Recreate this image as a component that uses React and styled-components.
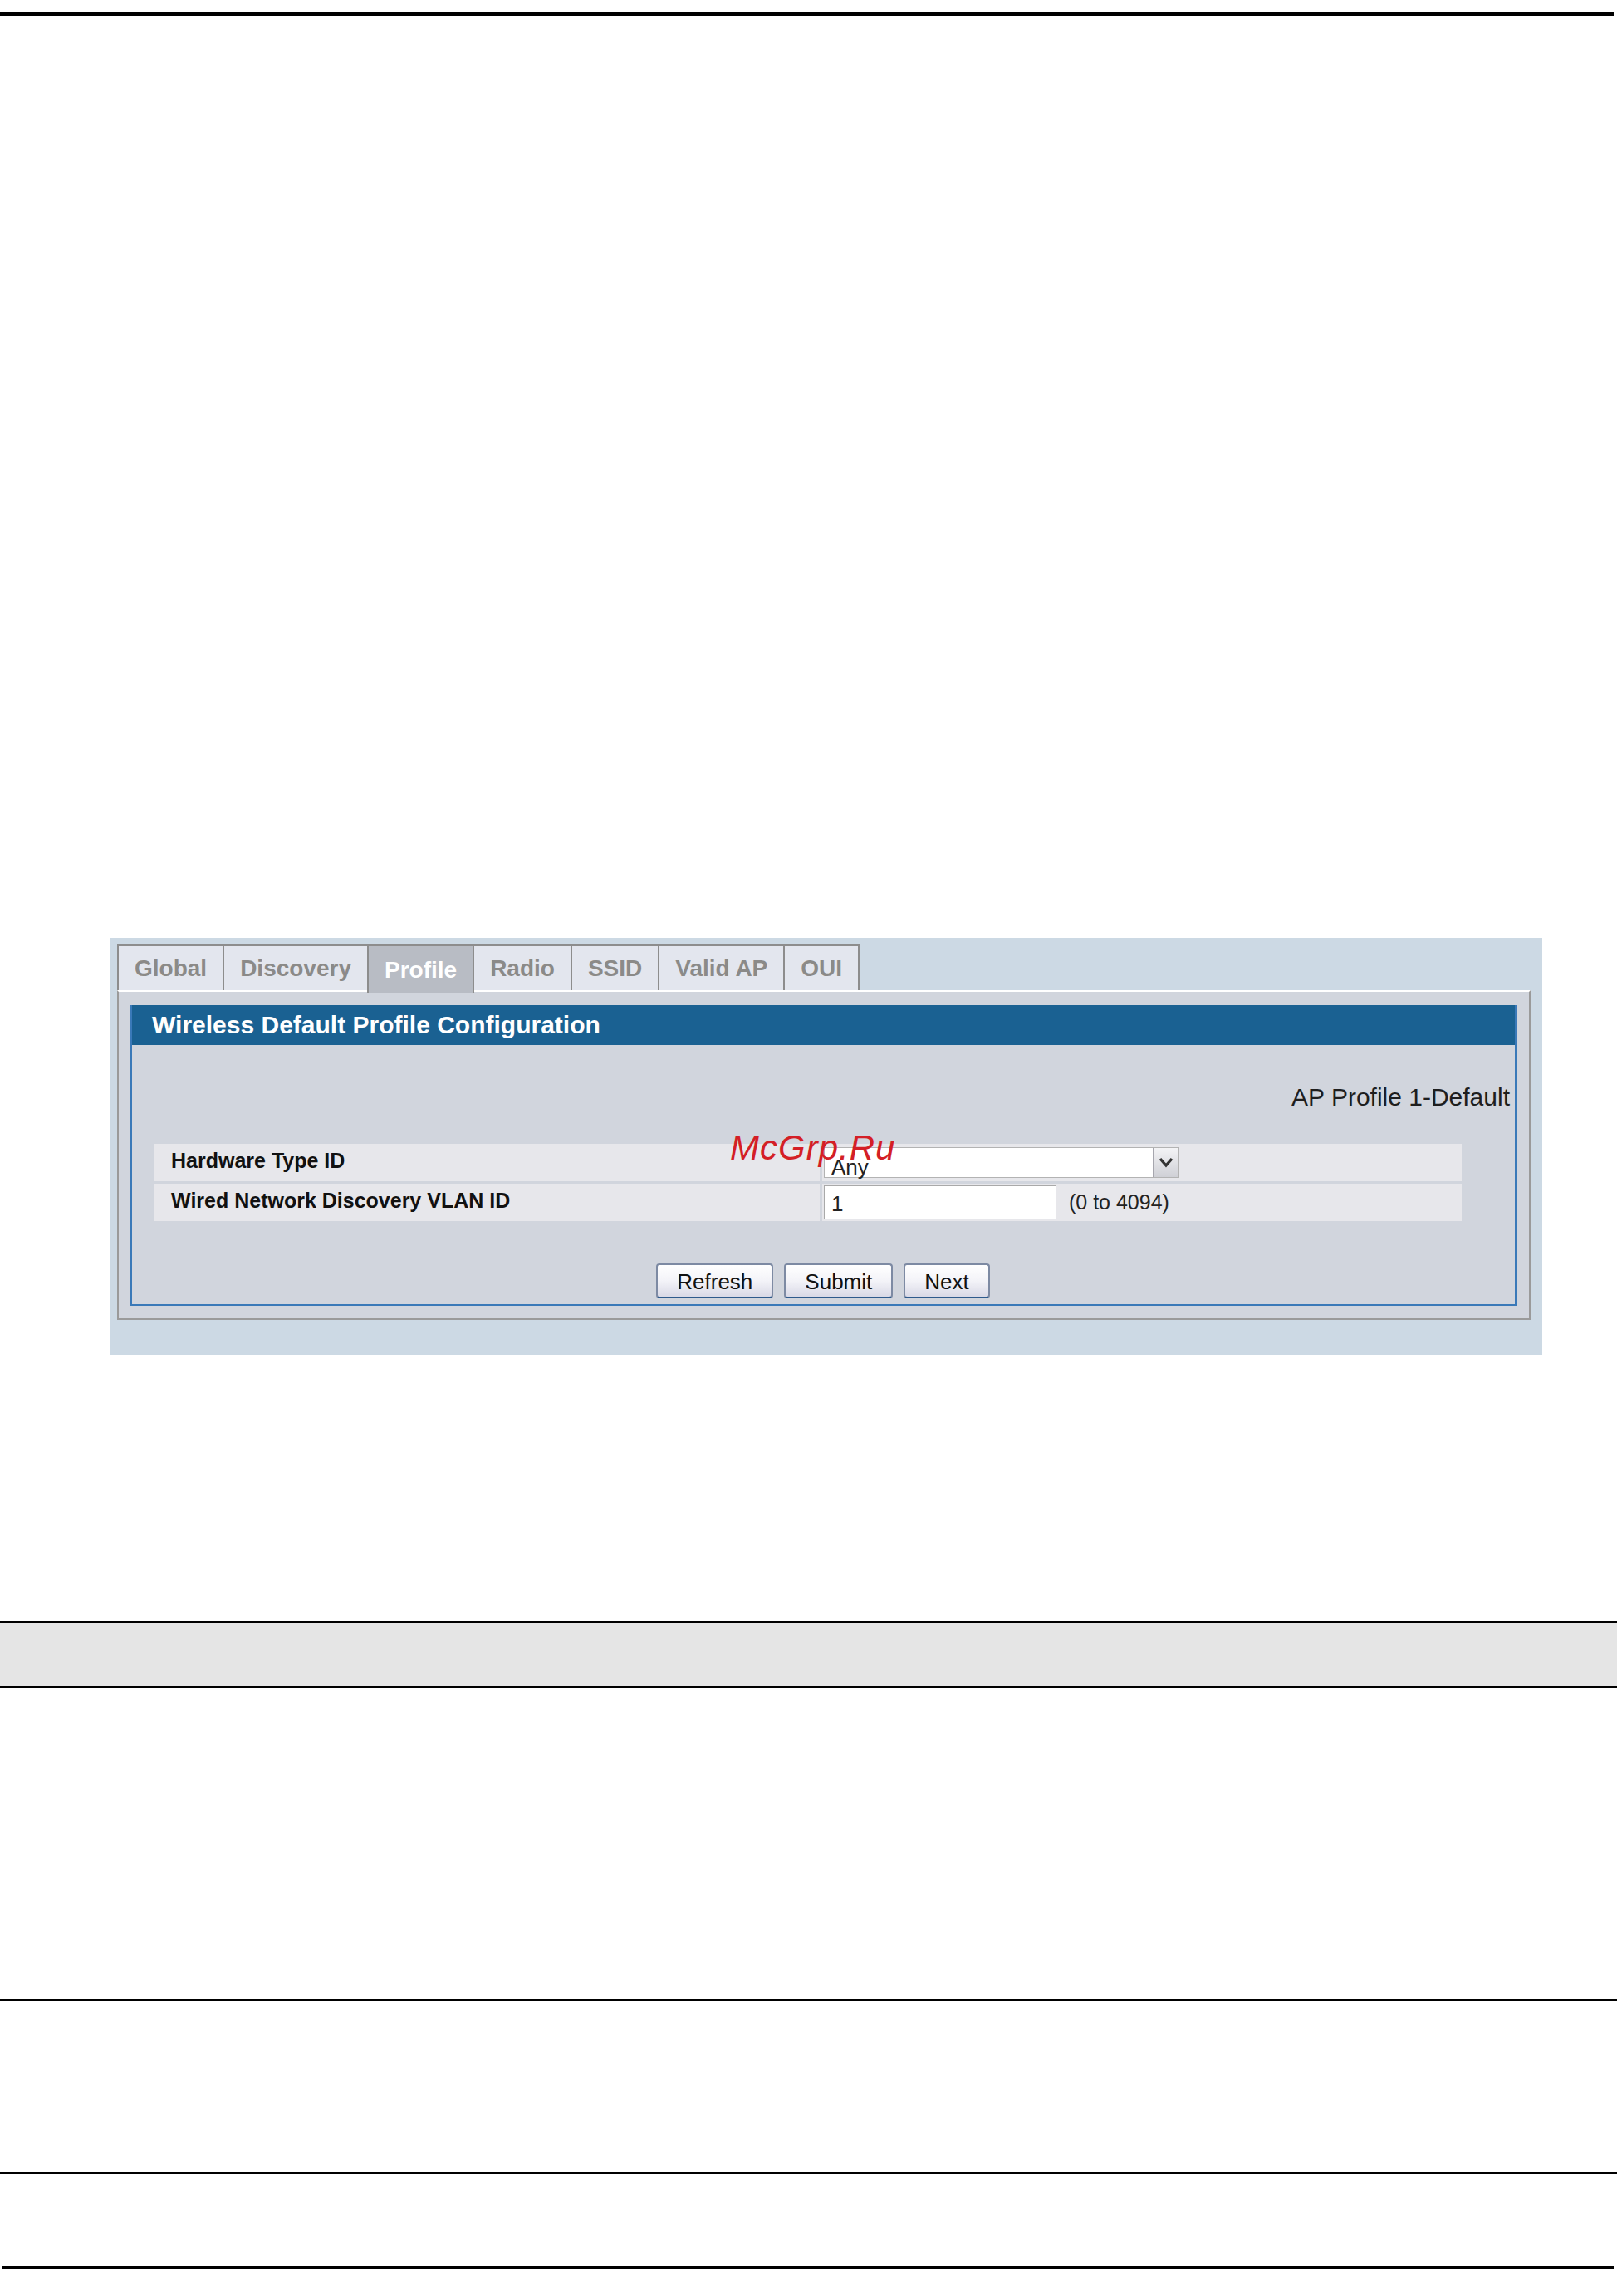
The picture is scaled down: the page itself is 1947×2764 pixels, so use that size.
import React from "react";
import styled, { createGlobalStyle } from "styled-components";

const GlobalStyle = createGlobalStyle`
  body {
    margin: 0;
    background: #fff;
    font-family: "Liberation Sans", Arial, sans-serif;
  }
`;

const Page = styled.div`
  width: 1947px;
  min-height: 2764px;
  overflow: hidden;
`;

const Rule = styled.div`
  height: ${props => props.thick ? 4 : 2}px;
  background: #000;
  margin: ${props => props.gap}px ${props => props.right || 0}px 0
    ${props => props.left || 0}px;
`;

const Figure = styled.div`
  padding: 1110px 0 0 132px;
`;

const Panel = styled.div`
  position: relative;
  width: 1725px;
  box-sizing: border-box;
  background: #ccd9e4;
  padding: 8px 14px 42px 9px;
`;

const TabBar = styled.div`
  display: flex;
  align-items: flex-end;
  height: 55px;
`;

const Tab = styled.div`
  position: relative;
  z-index: ${props => (props.active ? 1 : 0)};
  display: flex;
  align-items: center;
  box-sizing: border-box;
  height: ${props => (props.active ? 59 : 55)}px;
  margin-bottom: ${props => (props.active ? -4 : 0)}px;
  margin-left: -2px;
  padding: 0 19px;
  border: 2px solid #8d8d8d;
  border-bottom: none;
  background: ${props => (props.active ? "#b8bcc4" : "#e3e6ee")};
  color: ${props => (props.active ? "#ffffff" : "#8b8a88")};
  font-size: 28px;
  font-weight: 700;
  &:first-child {
    margin-left: 0;
  }
`;

const ContentBox = styled.div`
  border: 2px solid #9a9a9a;
  border-top-color: #ffffff;
  background: #d1d5dd;
  padding: 16px 15px 15px 14px;
`;

const BlueBox = styled.div`
  border: 2px solid #3a79b8;
  border-top: none;
  background: #d1d5dd;
`;

const TitleBar = styled.div`
  height: 48px;
  display: flex;
  align-items: center;
  padding-left: 24px;
  background: #1a6192;
  color: #fff;
  font-size: 30px;
  font-weight: 700;
`;

const Body = styled.div`
  padding: 46px 6px 7px 27px;
`;

const ProfileName = styled.div`
  text-align: right;
  font-size: 30px;
  line-height: 34px;
  color: #1e1e1e;
`;

const Rows = styled.div`
  display: grid;
  gap: 3px;
  margin: 39px 58px 0 0;
`;

const Row = styled.div`
  display: grid;
  grid-template-columns: 801px 1fr;
  column-gap: 3px;
  height: 45px;
`;

const LabelCell = styled.div`
  display: flex;
  align-items: center;
  padding: 0 0 4px 20px;
  background: #e7e7eb;
  font-size: 25px;
  font-weight: 700;
  color: #111;
`;

const ValueCell = styled.div`
  display: flex;
  align-items: center;
  padding-left: 2px;
  background: #e7e7eb;
`;

const Select = styled.div`
  display: flex;
  align-items: stretch;
  box-sizing: border-box;
  width: 428px;
  height: 37px;
  background: #fff;
  border: 1px solid #b3b3b3;
`;

const SelectText = styled.div`
  flex: 1;
  padding: 8px 0 0 8px;
  font-size: 26px;
  line-height: 30px;
  color: #222;
`;

const SelectArrow = styled.div`
  width: 30px;
  display: flex;
  align-items: center;
  justify-content: center;
  border-left: 1px solid #a6a6ae;
  background: linear-gradient(#f4f4f6, #cfd0d6);
`;

const TextInput = styled.input`
  box-sizing: border-box;
  width: 280px;
  height: 41px;
  margin: 0;
  padding: 4px 0 0 8px;
  border: 1px solid #a9a9a9;
  background: #fff;
  font-family: "Liberation Sans", Arial, sans-serif;
  font-size: 26px;
  color: #222;
  outline: none;
`;

const Hint = styled.span`
  margin-left: 15px;
  font-size: 25px;
  color: #222;
`;

const ButtonRow = styled.div`
  display: flex;
  justify-content: center;
  gap: 13px;
  margin-top: 51px;
  padding-right: 22px;
`;

const Button = styled.button`
  height: 42px;
  margin: 0;
  padding: 2px 23px 0;
  border: 2px solid #7d8aa3;
  border-bottom-color: #2e5a8c;
  border-radius: 4px;
  background: linear-gradient(#ffffff, #f3f3f8 50%, #d9d9e6);
  font-family: "Liberation Sans", Arial, sans-serif;
  font-size: 26px;
  color: #111;
`;

const Watermark = styled.div`
  position: absolute;
  left: 747px;
  top: 232px;
  font-size: 42px;
  line-height: 1;
  font-style: italic;
  letter-spacing: 1px;
  color: #d41f26;
  pointer-events: none;
`;

const GrayBand = styled.div`
  height: 76px;
  margin-top: 321px;
  border-top: 2px solid #000;
  border-bottom: 2px solid #000;
  background: #e5e5e5;
`;

const tabs = ["Global", "Discovery", "Profile", "Radio", "SSID", "Valid AP", "OUI"];

const Chevron = () => (
  <svg width="18" height="13" viewBox="0 0 18 13">
    <path d="M2 2 L9 10 L16 2" fill="none" stroke="#333" strokeWidth="3.4" />
  </svg>
);

export default function App() {
  return (
    <Page>
      <GlobalStyle />
      <Rule thick gap={15} right={4} />
      <Figure>
        <Panel>
          <TabBar>
            {tabs.map(t => (
              <Tab key={t} active={t === "Profile"}>
                {t}
              </Tab>
            ))}
          </TabBar>
          <ContentBox>
            <BlueBox>
              <TitleBar>Wireless Default Profile Configuration</TitleBar>
              <Body>
                <ProfileName>AP Profile 1-Default</ProfileName>
                <Rows>
                  <Row>
                    <LabelCell>Hardware Type ID</LabelCell>
                    <ValueCell>
                      <Select>
                        <SelectText>Any</SelectText>
                        <SelectArrow>
                          <Chevron />
                        </SelectArrow>
                      </Select>
                    </ValueCell>
                  </Row>
                  <Row>
                    <LabelCell>Wired Network Discovery VLAN ID</LabelCell>
                    <ValueCell>
                      <TextInput defaultValue="1" />
                      <Hint>(0 to 4094)</Hint>
                    </ValueCell>
                  </Row>
                </Rows>
                <ButtonRow>
                  <Button>Refresh</Button>
                  <Button>Submit</Button>
                  <Button>Next</Button>
                </ButtonRow>
              </Body>
            </BlueBox>
          </ContentBox>
          <Watermark>McGrp.Ru</Watermark>
        </Panel>
      </Figure>
      <GrayBand />
      <Rule gap={375} />
      <Rule gap={206} />
      <Rule thick gap={111} left={2} right={4} />
    </Page>
  );
}
